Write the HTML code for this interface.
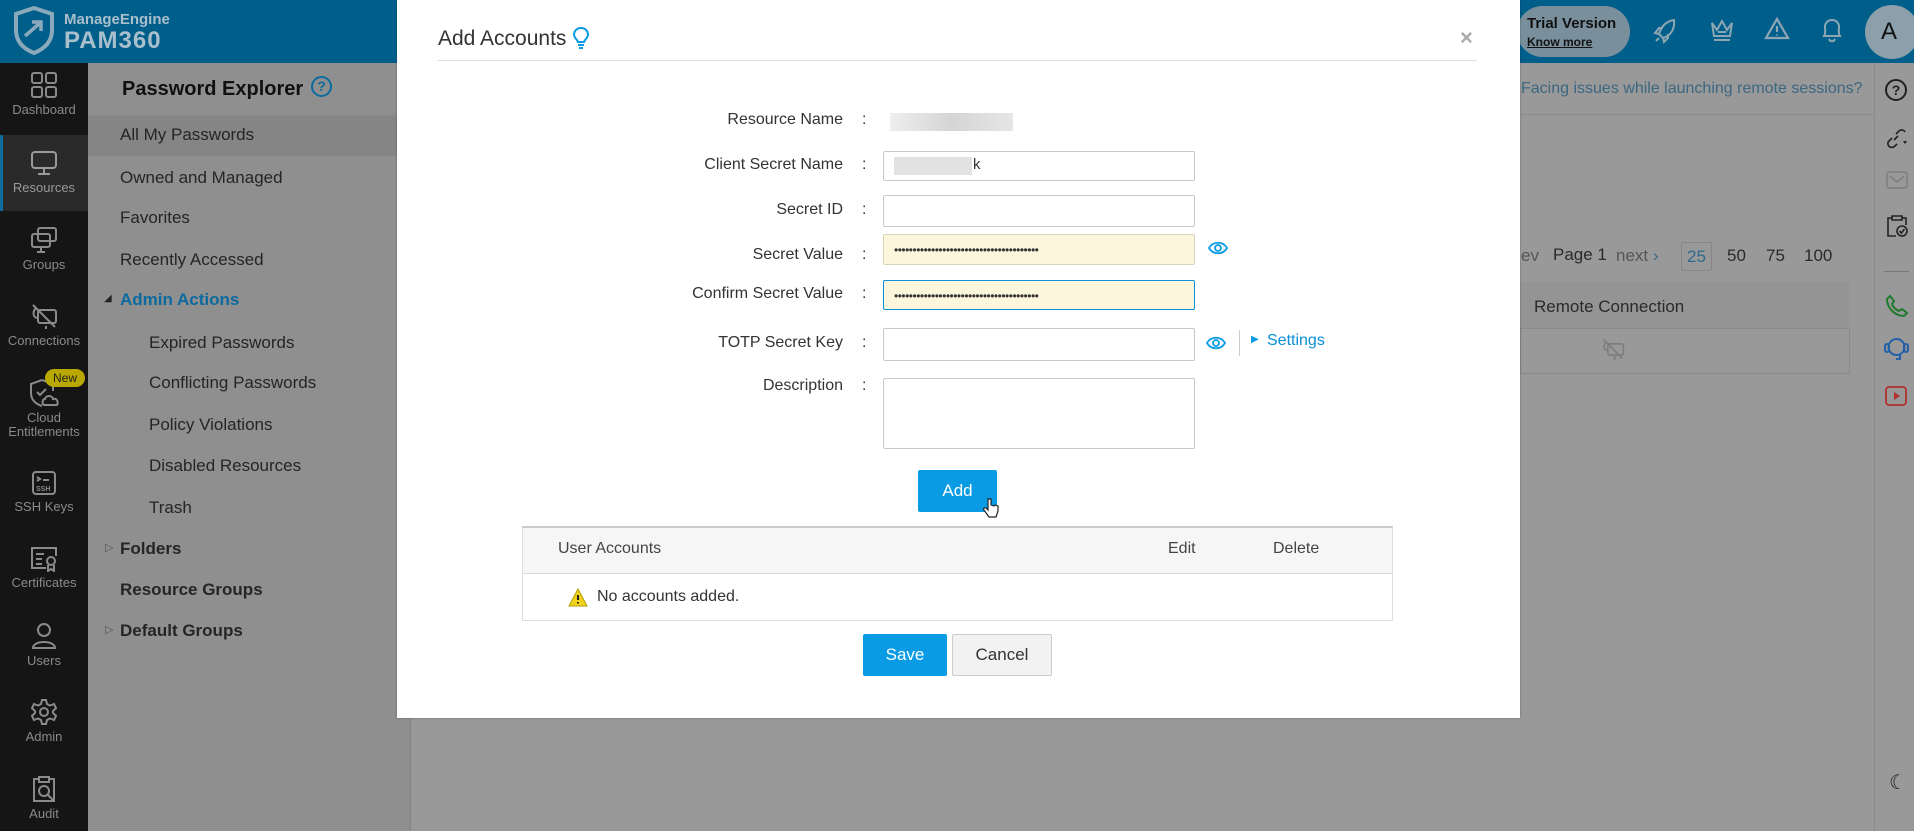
<!DOCTYPE html>
<html><head><meta charset="utf-8"><style>
*{box-sizing:border-box;margin:0;padding:0}
body{width:1914px;height:831px;overflow:hidden;position:relative;font-family:"Liberation Sans",sans-serif;background:#999}
.a{position:absolute;white-space:nowrap}
.hdr{left:0;top:0;width:1914px;height:63px;background:#005e8b}
.side{left:0;top:63px;width:88px;height:768px;background:#151515}
.si{position:absolute;left:0;width:88px;text-align:center;color:#8a8a8a;font-size:13px}
.si svg{display:block;margin:0 auto 3px}
.panel{left:88px;top:63px;width:323px;height:768px;background:#8f8f8f;border-right:1px solid #838383}
.pi{position:absolute;left:32px;font-size:17px;color:#252525}
.sub{left:61px}
.rs{left:1874px;top:63px;width:40px;height:768px;background:#999;border-left:1px solid #8a8a8a}
.modal{left:397px;top:0;width:1123px;height:718px;background:#fff;box-shadow:0 0 2px rgba(0,0,0,.3)}
.lbl{position:absolute;font-size:16px;color:#333;text-align:right}
.col{position:absolute;left:465px;font-size:16px;color:#333}
.inp{position:absolute;left:486px;width:312px;border:1px solid #c8c8c8;border-radius:2px;background:#fff}
.dots{font-size:12px;letter-spacing:-0.5px;padding:8px 0 0 10px;color:#333}
.btn{position:absolute;color:#fff;background:#0a9be5;border-radius:2px;text-align:center;font-size:17px}
</style></head><body>
<div class="a hdr"></div>
<svg class="a" style="left:12px;top:6px" width="44" height="49" viewBox="0 0 44 49"><path d="M22 2 L40 8 V24 C40 36 32 43 22 47 C12 43 4 36 4 24 V8 Z" fill="none" stroke="#8aa9bb" stroke-width="4"/><path d="M13 30 L28 17 M20 16 H29 V25" stroke="#8aa9bb" stroke-width="3.5" fill="none"/></svg>
<div class="a" style="left:64px;top:11px;color:#a9bfcc;font-size:15px;font-weight:bold">ManageEngine</div>
<div class="a" style="left:64px;top:27px;color:#a9bfcc;font-size:24px;font-weight:bold;letter-spacing:1px">PAM360</div>
<div class="a" style="left:1517px;top:6px;width:113px;height:51px;border-radius:26px;background:#79909c"></div>
<div class="a" style="left:1527px;top:15px;font-size:15px;font-weight:bold;color:#111">Trial Version</div>
<div class="a" style="left:1527px;top:35px;font-size:12px;font-weight:bold;color:#111;text-decoration:underline">Know more</div>
<svg class="a" style="left:1652px;top:17px" width="26" height="28" viewBox="0 0 26 28" fill="none" stroke="#8ea6b3" stroke-width="2"><path d="M22 3 C14 4 9 10 7 17 L11 21 C18 19 23 13 22 3Z M7 17 L3 16 L7 11 L11 11 M11 21 L12 25 L16 21 L16 17 M4 24 L7 21"/></svg>
<svg class="a" style="left:1709px;top:17px" width="26" height="27" viewBox="0 0 26 27" fill="none" stroke="#8ea6b3" stroke-width="2"><path d="M3 6 L8 13 L13 4 L18 13 L23 6 L21 19 H5 Z M5 23 H21 M9 15 H17"/></svg>
<svg class="a" style="left:1764px;top:16px" width="26" height="26" viewBox="0 0 26 26" fill="none" stroke="#8ea6b3" stroke-width="2.2"><path d="M13 3 L24 22 H2 Z M13 10 V16 M13 18.5 V19.5"/></svg>
<svg class="a" style="left:1820px;top:16px" width="24" height="28" viewBox="0 0 24 28" fill="none" stroke="#8ea6b3" stroke-width="2"><path d="M4 20 C6 17 5 14 5 11 C5 7 8 4 12 4 C16 4 19 7 19 11 C19 14 18 17 20 20 Z M9 23 C10 26 14 26 15 23"/></svg>
<div class="a" style="left:1865px;top:5px;width:54px;height:54px;border-radius:50%;background:#8ba0ab;color:#111;font-size:24px;text-align:center;line-height:54px;padding-right:6px">A</div>
<div class="a side"></div>
<div class="a" style="left:0;top:135px;width:88px;height:76px;background:#2a2a2a;border-left:3px solid #0b6a9e"></div>
<div class="si" style="top:71px"><svg width="28" height="28" viewBox="0 0 28 28" fill="none" stroke="#8a8a8a" stroke-width="2"><rect x="2" y="2" width="10" height="10" rx="2"/><rect x="16" y="2" width="10" height="10" rx="2"/><rect x="2" y="16" width="10" height="10" rx="2"/><rect x="16" y="16" width="10" height="10" rx="2"/></svg>Dashboard</div>
<div class="si" style="top:150px;color:#9a9a9a"><svg width="28" height="27" viewBox="0 0 28 27" fill="none" stroke="#9a9a9a" stroke-width="2"><rect x="2" y="2" width="24" height="16" rx="3"/><path d="M14 18 V24 M8 24 H20"/></svg>Resources</div>
<div class="si" style="top:226px"><svg width="28" height="28" viewBox="0 0 28 28" fill="none" stroke="#8a8a8a" stroke-width="2"><rect x="8" y="2" width="18" height="13" rx="2"/><rect x="2" y="8" width="18" height="13" rx="2"/><path d="M11 21 V26 M7 26 H15"/></svg>Groups</div>
<div class="si" style="top:302px"><svg width="28" height="28" viewBox="0 0 28 28" fill="none" stroke="#8a8a8a" stroke-width="2"><rect x="8" y="8" width="18" height="13" rx="2"/><path d="M3 3 L25 25 M6 6 C2 10 3 16 8 16 M16 24 V27"/></svg>Connections</div>
<div class="si" style="top:378px;line-height:14px"><svg width="30" height="30" viewBox="0 0 30 30" fill="none" stroke="#8a8a8a" stroke-width="2"><path d="M13 2 L24 6 V13 M13 2 L2 6 V15 C2 22 7 26 13 28"/><path d="M8 14 L11 17 L17 11"/><path d="M15 27 H28 C30 23 27 20 24 21 C23 17 17 17 16 21 C13 21 13 26 15 27Z"/></svg>Cloud<br>Entitlements</div>
<div class="a" style="left:45px;top:369px;width:40px;height:18px;border-radius:9px;background:#b9a800;color:#222;font-size:12px;text-align:center;line-height:18px">New</div>
<div class="si" style="top:470px"><svg width="26" height="26" viewBox="0 0 26 26" fill="none" stroke="#8a8a8a" stroke-width="2"><rect x="2" y="2" width="22" height="22" rx="3"/><path d="M6 7 L9 9 L6 11 M12 10 H18"/><text x="5" y="21" font-size="7" fill="#8a8a8a" stroke="none" font-family="Liberation Sans" font-weight="bold">SSH</text></svg>SSH Keys</div>
<div class="si" style="top:546px"><svg width="28" height="26" viewBox="0 0 28 26" fill="none" stroke="#8a8a8a" stroke-width="2"><path d="M16 22 H2 V2 H26 V10"/><path d="M6 8 H14 M6 13 H12 M6 18 H12"/><circle cx="21" cy="15" r="4"/><path d="M18 19 V25 L21 23 L24 25 V19"/></svg>Certificates</div>
<div class="si" style="top:622px"><svg width="26" height="28" viewBox="0 0 26 28" fill="none" stroke="#8a8a8a" stroke-width="2"><circle cx="13" cy="8" r="6"/><path d="M2 26 C2 18 24 18 24 26 Z"/></svg>Users</div>
<div class="si" style="top:698px"><svg width="28" height="28" viewBox="0 0 28 28" fill="none" stroke="#8a8a8a" stroke-width="2"><circle cx="14" cy="14" r="4"/><path d="M12 2 H16 L17 6 L20 7.5 L24 6 L26 10 L23 13 V15 L26 18 L24 22 L20 20.5 L17 22 L16 26 H12 L11 22 L8 20.5 L4 22 L2 18 L5 15 V13 L2 10 L4 6 L8 7.5 L11 6 Z"/></svg>Admin</div>
<div class="si" style="top:775px"><svg width="28" height="28" viewBox="0 0 28 28" fill="none" stroke="#8a8a8a" stroke-width="2"><path d="M9 4 H4 V26 H24 V4 H19 M9 2 H19 V7 H9 Z"/><circle cx="14" cy="16" r="5"/><path d="M18 20 L24 26"/></svg>Audit</div>
<div class="a panel">
<div class="a" style="left:34px;top:15px;font-size:20px;font-weight:bold;color:#111">Password Explorer</div>
<div class="a" style="left:223px;top:13px;width:21px;height:21px;border-radius:50%;border:2px solid #0b6a9e;color:#0b6a9e;font-size:14px;font-weight:bold;text-align:center;line-height:17px">?</div>
<div class="a" style="left:0;top:52px;width:322px;height:41px;background:#858585;border-top:1px solid #888"></div>
<div class="pi" style="top:62px">All My Passwords</div>
<div class="pi" style="top:105px">Owned and Managed</div>
<div class="pi" style="top:145px">Favorites</div>
<div class="pi" style="top:187px">Recently Accessed</div>
<div class="pi" style="top:227px;color:#0b6a9e;font-weight:bold">Admin Actions</div>
<div class="a" style="left:16px;top:230px;font-size:10px;color:#222">◢</div>
<div class="pi sub" style="top:270px">Expired Passwords</div>
<div class="pi sub" style="top:310px">Conflicting Passwords</div>
<div class="pi sub" style="top:352px">Policy Violations</div>
<div class="pi sub" style="top:393px">Disabled Resources</div>
<div class="pi sub" style="top:435px">Trash</div>
<div class="a" style="left:17px;top:478px;font-size:11px;color:#555">▷</div>
<div class="pi" style="top:476px;font-weight:bold">Folders</div>
<div class="pi" style="top:517px;font-weight:bold">Resource Groups</div>
<div class="a" style="left:17px;top:560px;font-size:11px;color:#555">▷</div>
<div class="pi" style="top:558px;font-weight:bold">Default Groups</div>
</div>
<div class="a" style="left:1521px;top:80px;font-size:16px;color:#3c6781">Facing issues while launching remote sessions?</div>
<div class="a" style="left:1521px;top:114px;width:353px;height:1px;background:#8b8b8b"></div>
<div class="a" style="left:1521px;top:246px;font-size:17px;color:#555">ev</div>
<div class="a" style="left:1553px;top:245px;font-size:17px;color:#2a2a2a">Page 1</div>
<div class="a" style="left:1616px;top:246px;font-size:17px;color:#555">next <span style="color:#3c6781">›</span></div>
<div class="a" style="left:1681px;top:242px;width:31px;height:29px;border:1px solid #868686;border-radius:2px;color:#2f6a8e;font-size:17px;text-align:center;line-height:27px">25</div>
<div class="a" style="left:1727px;top:246px;font-size:17px;color:#2a2a2a">50</div>
<div class="a" style="left:1766px;top:246px;font-size:17px;color:#2a2a2a">75</div>
<div class="a" style="left:1804px;top:246px;font-size:17px;color:#2a2a2a">100</div>
<div class="a" style="left:1520px;top:282px;width:330px;height:92px;border:1px solid #8a8a8a"></div>
<div class="a" style="left:1520px;top:282px;width:330px;height:47px;background:#949494;border-bottom:1px solid #8a8a8a"></div>
<div class="a" style="left:1534px;top:297px;font-size:17px;color:#2a2a2a">Remote Connection</div>
<svg class="a" style="left:1601px;top:337px" width="24" height="24" viewBox="0 0 28 28" fill="none" stroke="#7e7e7e" stroke-width="2"><rect x="8" y="8" width="18" height="13" rx="2"/><path d="M3 3 L25 25 M6 6 C2 10 3 16 8 16 M16 21 V27"/></svg>
<div class="a rs"></div>
<div class="a" style="left:1885px;top:79px;width:22px;height:22px;border-radius:50%;border:2px solid #222;font-size:14px;font-weight:bold;text-align:center;line-height:18px;color:#222">?</div>
<svg class="a" style="left:1885px;top:127px" width="24" height="22" fill="none" stroke="#222" stroke-width="1.6"><path d="M9 13 L13 9 M7 11 L4 14 C2 16 3 19 5 20 C7 21 9 20 10 19 L12 17 M11 7 L14 4 C16 2 19 3 20 5"/><path d="M18 14 L22 14 L20 17 Z" fill="#222" stroke="none"/></svg>
<svg class="a" style="left:1886px;top:171px" width="22" height="18"><rect x="1" y="1" width="20" height="16" rx="3" fill="none" stroke="#7d7d7d" stroke-width="1.5"/><path d="M4 5 L11 11 L18 5" fill="none" stroke="#7d7d7d" stroke-width="1.5"/></svg>
<svg class="a" style="left:1886px;top:214px" width="22" height="24" fill="none" stroke="#222" stroke-width="1.6"><path d="M6 4 H2 V22 H10 M16 4 H20 V11 M6 2 H16 V6 H6 Z"/><circle cx="16" cy="17" r="5"/><path d="M13.5 17 L15.5 19 L18.5 15"/></svg>
<div class="a" style="left:1884px;top:271px;width:25px;height:1px;background:#777"></div>
<svg class="a" style="left:1885px;top:294px" width="24" height="24" fill="none" stroke="#1f7a2e" stroke-width="2"><path d="M5 2 L9 7 L7 10 C8 13 11 16 14 17 L17 15 L22 19 L19 22 C10 22 2 14 2 5 Z"/></svg>
<svg class="a" style="left:1884px;top:335px" width="25" height="27" fill="none" stroke="#2360a8" stroke-width="2"><circle cx="12.5" cy="12" r="8"/><rect x="1" y="9" width="4" height="8" rx="2"/><rect x="20" y="9" width="4" height="8" rx="2"/><path d="M12 24 H16 V20"/></svg>
<svg class="a" style="left:1885px;top:386px" width="22" height="20"><rect x="1" y="1" width="20" height="18" rx="3" fill="none" stroke="#b0302b" stroke-width="1.8"/><path d="M9 6 L15 10 L9 14 Z" fill="#b0302b"/></svg>
<div class="a" style="left:1889px;top:770px;font-size:20px;color:#222">☾</div>
<div class="a modal">
<div class="a" style="left:41px;top:27px;font-size:21px;color:#333">Add Accounts</div>
<svg class="a" style="left:176px;top:26px" width="16" height="24" fill="none" stroke="#0a9be5" stroke-width="2"><path d="M8 2 C3 2 1 6 1 8.5 C1 12 4 13 5 16 H11 C12 13 15 12 15 8.5 C15 6 13 2 8 2 Z M5 19 H11 M6 22 H10"/></svg>
<div class="a" style="left:1063px;top:25px;font-size:22px;color:#aaa;font-weight:bold">×</div>
<div class="a" style="left:41px;top:60px;width:1039px;height:1px;background:#ddd"></div>
<div class="lbl" style="left:150px;width:296px;top:111px">Resource Name</div><div class="col" style="top:111px">:</div>
<div class="a" style="left:493px;top:113px;width:123px;height:18px;background:linear-gradient(90deg,#eee,#d5d5d5,#e6e6e6)"></div>
<div class="lbl" style="left:150px;width:296px;top:156px">Client Secret Name</div><div class="col" style="top:156px">:</div>
<div class="inp" style="top:151px;height:30px"></div>
<div class="a" style="left:497px;top:157px;width:78px;height:18px;background:#e2e2e2"></div>
<div class="a" style="left:576px;top:156px;font-size:15px;color:#333">k</div>
<div class="lbl" style="left:150px;width:296px;top:201px">Secret ID</div><div class="col" style="top:201px">:</div>
<div class="inp" style="top:195px;height:32px"></div>
<div class="lbl" style="left:150px;width:296px;top:246px">Secret Value</div><div class="col" style="top:246px">:</div>
<div class="inp dots" style="top:234px;height:31px;background:#fcf6dd;border-color:#d9d3b7">•••••••••••••••••••••••••••••••••••••••</div>
<svg class="a" style="left:811px;top:240px" width="20" height="16" fill="none" stroke="#0a9be5" stroke-width="1.8"><path d="M1 8 C5 1 15 1 19 8 C15 15 5 15 1 8 Z"/><circle cx="10" cy="8" r="3"/></svg>
<div class="lbl" style="left:150px;width:296px;top:285px">Confirm Secret Value</div><div class="col" style="top:285px">:</div>
<div class="inp dots" style="top:280px;height:30px;background:#fcf6dd;border-color:#0a8fd8">•••••••••••••••••••••••••••••••••••••••</div>
<div class="lbl" style="left:150px;width:296px;top:334px">TOTP Secret Key</div><div class="col" style="top:334px">:</div>
<div class="inp" style="top:328px;height:33px"></div>
<svg class="a" style="left:809px;top:335px" width="20" height="16" fill="none" stroke="#0a9be5" stroke-width="1.8"><path d="M1 8 C5 1 15 1 19 8 C15 15 5 15 1 8 Z"/><circle cx="10" cy="8" r="3"/></svg>
<div class="a" style="left:842px;top:330px;width:1px;height:26px;background:#ccc"></div>
<div class="a" style="left:854px;top:334px;font-size:10px;color:#0a9be5">▶</div>
<div class="a" style="left:870px;top:332px;font-size:16px;color:#0a8fd8">Settings</div>
<div class="lbl" style="left:150px;width:296px;top:377px">Description</div><div class="col" style="top:377px">:</div>
<div class="inp" style="top:378px;height:71px"></div>
<div class="btn" style="left:521px;top:470px;width:79px;height:42px;line-height:42px">Add</div>
<svg class="a" style="left:586px;top:498px" width="16" height="22"><path d="M5 1 V12 L3 10 C1 9 0 11 1 12 L6 19 H13 L15 13 V8 L12 7 L11 8 L8 7 V1 Z" fill="#fff" stroke="#222" stroke-width="1.2"/></svg>
<div class="a" style="left:125px;top:526px;width:871px;height:95px;border:1px solid #ddd;border-top:2px solid #ccc"></div>
<div class="a" style="left:126px;top:528px;width:869px;height:46px;background:#f6f6f6;border-bottom:1px solid #ddd"></div>
<div class="a" style="left:161px;top:540px;font-size:16px;color:#444">User Accounts</div>
<div class="a" style="left:771px;top:540px;font-size:16px;color:#444">Edit</div>
<div class="a" style="left:876px;top:540px;font-size:16px;color:#444">Delete</div>
<svg class="a" style="left:171px;top:588px" width="20" height="19"><path d="M10 1 L19 18 H1 Z" fill="#f2d31b" stroke="#b79a00"/><path d="M10 7 V12 M10 14 V15.5" stroke="#222" stroke-width="2"/></svg>
<div class="a" style="left:200px;top:588px;font-size:16px;color:#333">No accounts added.</div>
<div class="btn" style="left:466px;top:634px;width:84px;height:42px;line-height:42px">Save</div>
<div class="a" style="left:555px;top:634px;width:100px;height:42px;background:#f2f2f2;border:1px solid #ccc;border-radius:2px;font-size:17px;color:#333;text-align:center;line-height:40px">Cancel</div>
</div>
</body></html>
